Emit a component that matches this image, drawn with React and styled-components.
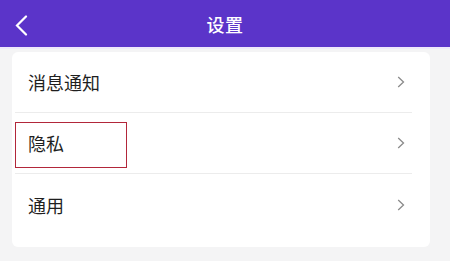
import React from "react";
import styled, { createGlobalStyle } from "styled-components";

const Global = createGlobalStyle`
  html, body {
    margin: 0;
    padding: 0;
    background: #f4f4f5;
    font-family: "Noto Sans CJK SC", "Noto Sans", sans-serif;
  }
`;

const Page = styled.div`
  width: 450px;
  height: 261px;
  background: #f4f4f5;
  overflow: hidden;
`;

const Header = styled.header`
  height: 47px;
  background: #5b34c9;
  display: flex;
  align-items: center;
  justify-content: center;
  position: relative;
  border-bottom: 2px solid #efe8fb;
`;

const Back = styled.span`
  position: absolute;
  left: 14px;
  top: 15px;
  display: flex;
`;

const Title = styled.h1`
  margin: 0;
  color: #ffffff;
  font-size: 18px;
  font-weight: 500;
  line-height: 1;
  letter-spacing: 0.5px;
`;

const Card = styled.div`
  margin: 3px 20px 0 12px;
  background: #ffffff;
  border-radius: 6px;
  padding: 0 0 12px 0;
`;

const Row = styled.div`
  height: 61px;
  box-sizing: border-box;
  display: flex;
  align-items: center;
  justify-content: space-between;
  padding: 0 7px 0 13px;
  margin: 0 18px 0 3px;
  border-bottom: ${(p) => (p.$last ? "none" : "1px solid #ececec")};
`;

const Label = styled.span`
  font-size: 18px;
  line-height: 26px;
  color: #1f1f1f;
  position: relative;
`;

const Highlight = styled.span`
  position: absolute;
  left: -13px;
  top: -8px;
  width: 110px;
  height: 44px;
  border: 1.5px solid #b2273a;
`;

const Chevron = () => (
  <svg width="8" height="12" viewBox="0 0 8 12">
    <path d="M1.2 1 L6.5 6 L1.2 11" fill="none" stroke="#8a8a8a" strokeWidth="1.3" />
  </svg>
);

const items = [
  { name: "消息通知" },
  { name: "隐私", boxed: true },
  { name: "通用" },
];

export default function App() {
  return (
    <Page>
      <Global />
      <Header>
        <Back>
          <svg width="14" height="21" viewBox="0 0 14 21">
            <path d="M12 1.5 L3 10.5 L12 19.5" fill="none" stroke="#ffffff" strokeWidth="2.2" strokeLinecap="round" />
          </svg>
        </Back>
        <Title>设置</Title>
      </Header>
      <Card>
        {items.map((it, i) => (
          <Row key={it.name} $last={i === items.length - 1}>
            <Label>
              {it.boxed && <Highlight />}
              {it.name}
            </Label>
            <Chevron />
          </Row>
        ))}
      </Card>
    </Page>
  );
}
